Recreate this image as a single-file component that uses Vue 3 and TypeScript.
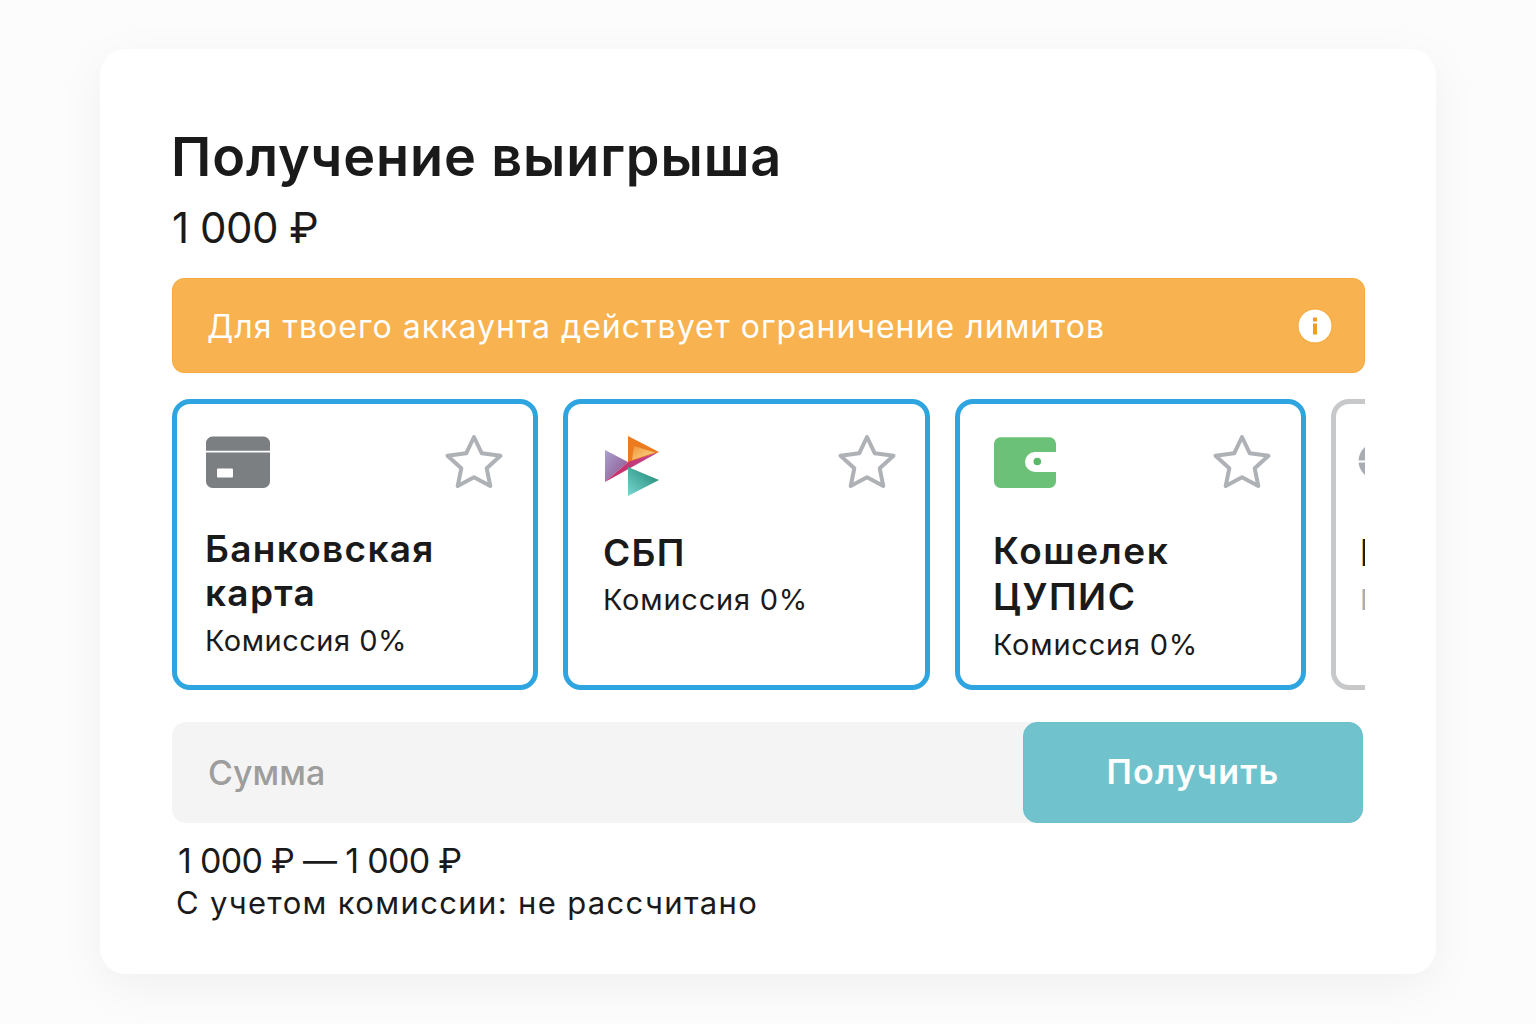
<script setup lang="ts">
interface Method { id: string; title: string[]; cls: string }
const methods: Method[] = [
  { id: 'card', title: ['Банковская', 'карта'], cls: 'm-card' },
  { id: 'sbp', title: ['СБП'], cls: 'm-sbp' },
  { id: 'wallet', title: ['Кошелек', 'ЦУПИС'], cls: 'm-wallet' },
  { id: 'other', title: ['ЮMoney'], cls: 'm-other' },
]
</script>

<template>
  <div class="page">
    <section class="panel">
      <h1 class="title">Получение выигрыша</h1>
      <div class="amount">1 000 ₽</div>

      <div class="notice">
        <span>Для твоего аккаунта действует ограничение лимитов</span>
        <svg class="info" width="36" height="36" viewBox="0 0 36 36">
          <circle cx="18" cy="18" r="17" fill="#fff" stroke="#f6a52e" stroke-width="1" />
          <rect x="16" y="9.500" width="4" height="4" fill="#f39c1f" />
          <rect x="16" y="15.500" width="4" height="11" fill="#f39c1f" />
        </svg>
      </div>

      <div class="methods">
        <article v-for="m in methods" :key="m.id" class="method" :class="m.cls">
          <div class="top">
            <svg v-if="m.id === 'card'" class="logo" width="66" height="52" viewBox="0 0 66 52">
              <path d="M1 14.700V7a6.500 6.500 0 0 1 6.500-6.500h51A6.500 6.500 0 0 1 65 7v7.700z" fill="#7c7f82" />
              <path d="M1 16.500h64V45.500a6.500 6.500 0 0 1-6.500 6.500h-51A6.500 6.500 0 0 1 1 45.500z" fill="#7c7f82" />
              <rect x="12" y="32.500" width="16" height="9" rx="1" fill="#fff" />
            </svg>
            <svg v-else-if="m.id === 'sbp'" class="logo" width="55" height="61" viewBox="0 0 55 61">
              <defs>
                <linearGradient id="sbpA" x1="0" y1="0" x2="1" y2="1">
                  <stop offset="0" stop-color="#a9a2d0" />
                  <stop offset="1" stop-color="#8d4f8a" />
                </linearGradient>
                <linearGradient id="sbpB" x1="0" y1="0" x2="1" y2="0">
                  <stop offset="0" stop-color="#c92a63" />
                  <stop offset="1" stop-color="#c0478f" />
                </linearGradient>
                <linearGradient id="sbpC" x1="0" y1="1" x2="1" y2="0">
                  <stop offset="0" stop-color="#7ad6d0" />
                  <stop offset="1" stop-color="#17836f" />
                </linearGradient>
                <linearGradient id="sbpD" x1="0" y1="0" x2="1" y2="1">
                  <stop offset="0" stop-color="#f0953a" />
                  <stop offset="1" stop-color="#fbdc8f" />
                </linearGradient>
              </defs>
              <path d="M23 0 54 16 23 27z" fill="#ec7a1f" />
              <path d="M29 10 50 16.500 27 24z" fill="url(#sbpD)" />
              <path d="M0 14 23 26 0 46z" fill="url(#sbpA)" />
              <path d="M23 26 54 16 27 31 0 46z" fill="url(#sbpB)" />
              <path d="M23 31 54 44 23 60z" fill="url(#sbpC)" />
            </svg>
            <svg v-else-if="m.id === 'wallet'" class="logo wallet" width="62" height="51" viewBox="0 0 62 51">
              <path d="M6.500 0.300h49A6.500 6.500 0 0 1 62 6.800V15H41a10 10 0 0 0 0 20H62v9.500a6.500 6.500 0 0 1-6.500 6.500h-49A6.500 6.500 0 0 1 0 44.500V6.800A6.500 6.500 0 0 1 6.500 0.300z" fill="#6cc178" />
              <circle cx="43.300" cy="24.500" r="3.800" fill="#5bb96a" />
            </svg>
            <svg v-else class="logo" width="38" height="38" viewBox="0 0 38 38">
              <circle cx="19" cy="19" r="18.500" fill="#a9adb1" />
              <rect x="0" y="18.500" width="38" height="2" fill="#fff" />
            </svg>
            <svg v-if="m.id !== 'other'" class="star" width="60" height="58" viewBox="0 0 60 58">
              <path d="M30 4 37.800 20.300 56.500 22.700 42.700 35.300 46.300 53 30 44.300 13.700 53 17.300 35.300 3.500 22.700 22.200 20.300z" fill="none" stroke="#aeb1b5" stroke-width="4" stroke-linejoin="round" />
            </svg>
          </div>
          <div class="name">
            <div v-for="line in m.title" :key="line">{{ line }}</div>
          </div>
          <div class="fee">Комиссия 0%</div>
        </article>
      </div>

      <div class="form">
        <div class="field">Сумма</div>
        <button class="submit" type="button">Получить</button>
      </div>

      <div class="hint">
        <div class="range">1 000 ₽ — 1 000 ₽</div>
        <div class="calc">С учетом комиссии: не рассчитано</div>
      </div>
    </section>
  </div>
</template>

<style>
html, body { margin: 0; background: #fcfcfc; }
</style>

<style scoped>
.page {
  width: 1536px;
  height: 1024px;
  box-sizing: border-box;
  padding: 49px 100px 50px;
  background: #fcfcfc;
  font-family: "Inter", "Noto Sans", sans-serif;
  color: #1a1a1a;
  overflow: hidden;
}
.panel {
  height: 925px;
  box-sizing: border-box;
  padding: 70px 71px 0 72px;
  background: #fff;
  border-radius: 26px;
  box-shadow: 0 12px 48px rgba(0, 0, 0, 0.05);
}
.title {
  margin: 0;
  font-size: 54px;
  line-height: 76px;
  font-weight: 600;
  letter-spacing: 0.9px;
  margin-left: -1px;
}
.amount {
  margin-top: 4px;
  font-size: 42px;
  line-height: 58px;
  font-weight: 400;
  letter-spacing: -0.5px;
}
.notice {
  margin-top: 21px;
  height: 95px;
  box-sizing: border-box;
  padding: 0 31px 0 34px;
  display: flex;
  align-items: center;
  justify-content: space-between;
  background: #f8b250;
  border: 1px solid #f7ab3e;
  border-radius: 12px;
  color: #fff;
  font-size: 32px;
  letter-spacing: 1.04px;
}
.notice span { padding-top: 2px; }
.info { flex: none; }
.methods {
  margin-top: 26px;
  display: flex;
  gap: 25px;
  height: 291px;
  overflow: hidden;
}
.method {
  flex: none;
  box-sizing: border-box;
  height: 291px;
  padding: 32px 29px 0 28px;
  border: 5px solid #2ea4e0;
  border-radius: 18px;
  background: #fff;
}
.m-card { width: 366px; }
.m-sbp { width: 367px; padding-left: 37px; padding-right: 28px; }
.m-wallet { width: 351px; padding-left: 34px; }
.m-other { width: 300px; border-color: #c6c8ca; padding-left: 24px; }
.top {
  height: 62px;
  display: flex;
  align-items: flex-start;
  justify-content: space-between;
}
.logo { flex: none; display: block; }
.star { flex: none; margin-top: -3px; }
.wallet { margin-top: 1px; }
.m-other .logo { margin: 6px 0 0 -2px; }
.name {
  margin-top: 29px;
  font-size: 37px;
  line-height: 44px;
  font-weight: 600;
  letter-spacing: 1.3px;
}
.m-sbp .name { margin-top: 33px; margin-left: -2px; }
.m-wallet .name { margin-top: 30px; margin-left: -1px; line-height: 46px; letter-spacing: 1.6px; }
.m-other .name { margin-top: 33px; }
.fee {
  margin-top: 6px;
  font-size: 29px;
  line-height: 40px;
  letter-spacing: 0.5px;
}
.m-sbp .fee { margin-left: -2px; margin-top: 5px; letter-spacing: 0.78px; }
.m-wallet .fee { margin-top: 5px; margin-left: -1px; letter-spacing: 0.78px; }
.m-other .fee { margin-top: 5px; color: #a9adb1; }
.form {
  margin-top: 32px;
  display: flex;
  height: 101px;
  width: 1191px;
  background: #f4f4f4;
  border-radius: 14px;
}
.field {
  flex: 1;
  padding-left: 36px;
  display: flex;
  align-items: center;
  font-size: 34px;
  font-weight: 500;
  color: #9d9d9d;
}
.submit {
  flex: none;
  width: 340px;
  border: 1px solid #6cc0cc;
  border-radius: 14px;
  background: #70c2cd;
  color: #fff;
  font-family: inherit;
  font-size: 34px;
  font-weight: 600;
  letter-spacing: 1.2px;
  padding: 0 0 2px;
}
.hint {
  margin-top: 15px;
  padding-left: 4px;
}
.range {
  font-size: 34px;
  line-height: 45px;
  letter-spacing: -0.7px;
  padding-left: 2px;
}
.calc {
  font-size: 31px;
  line-height: 40px;
  letter-spacing: 1.35px;
}
</style>
